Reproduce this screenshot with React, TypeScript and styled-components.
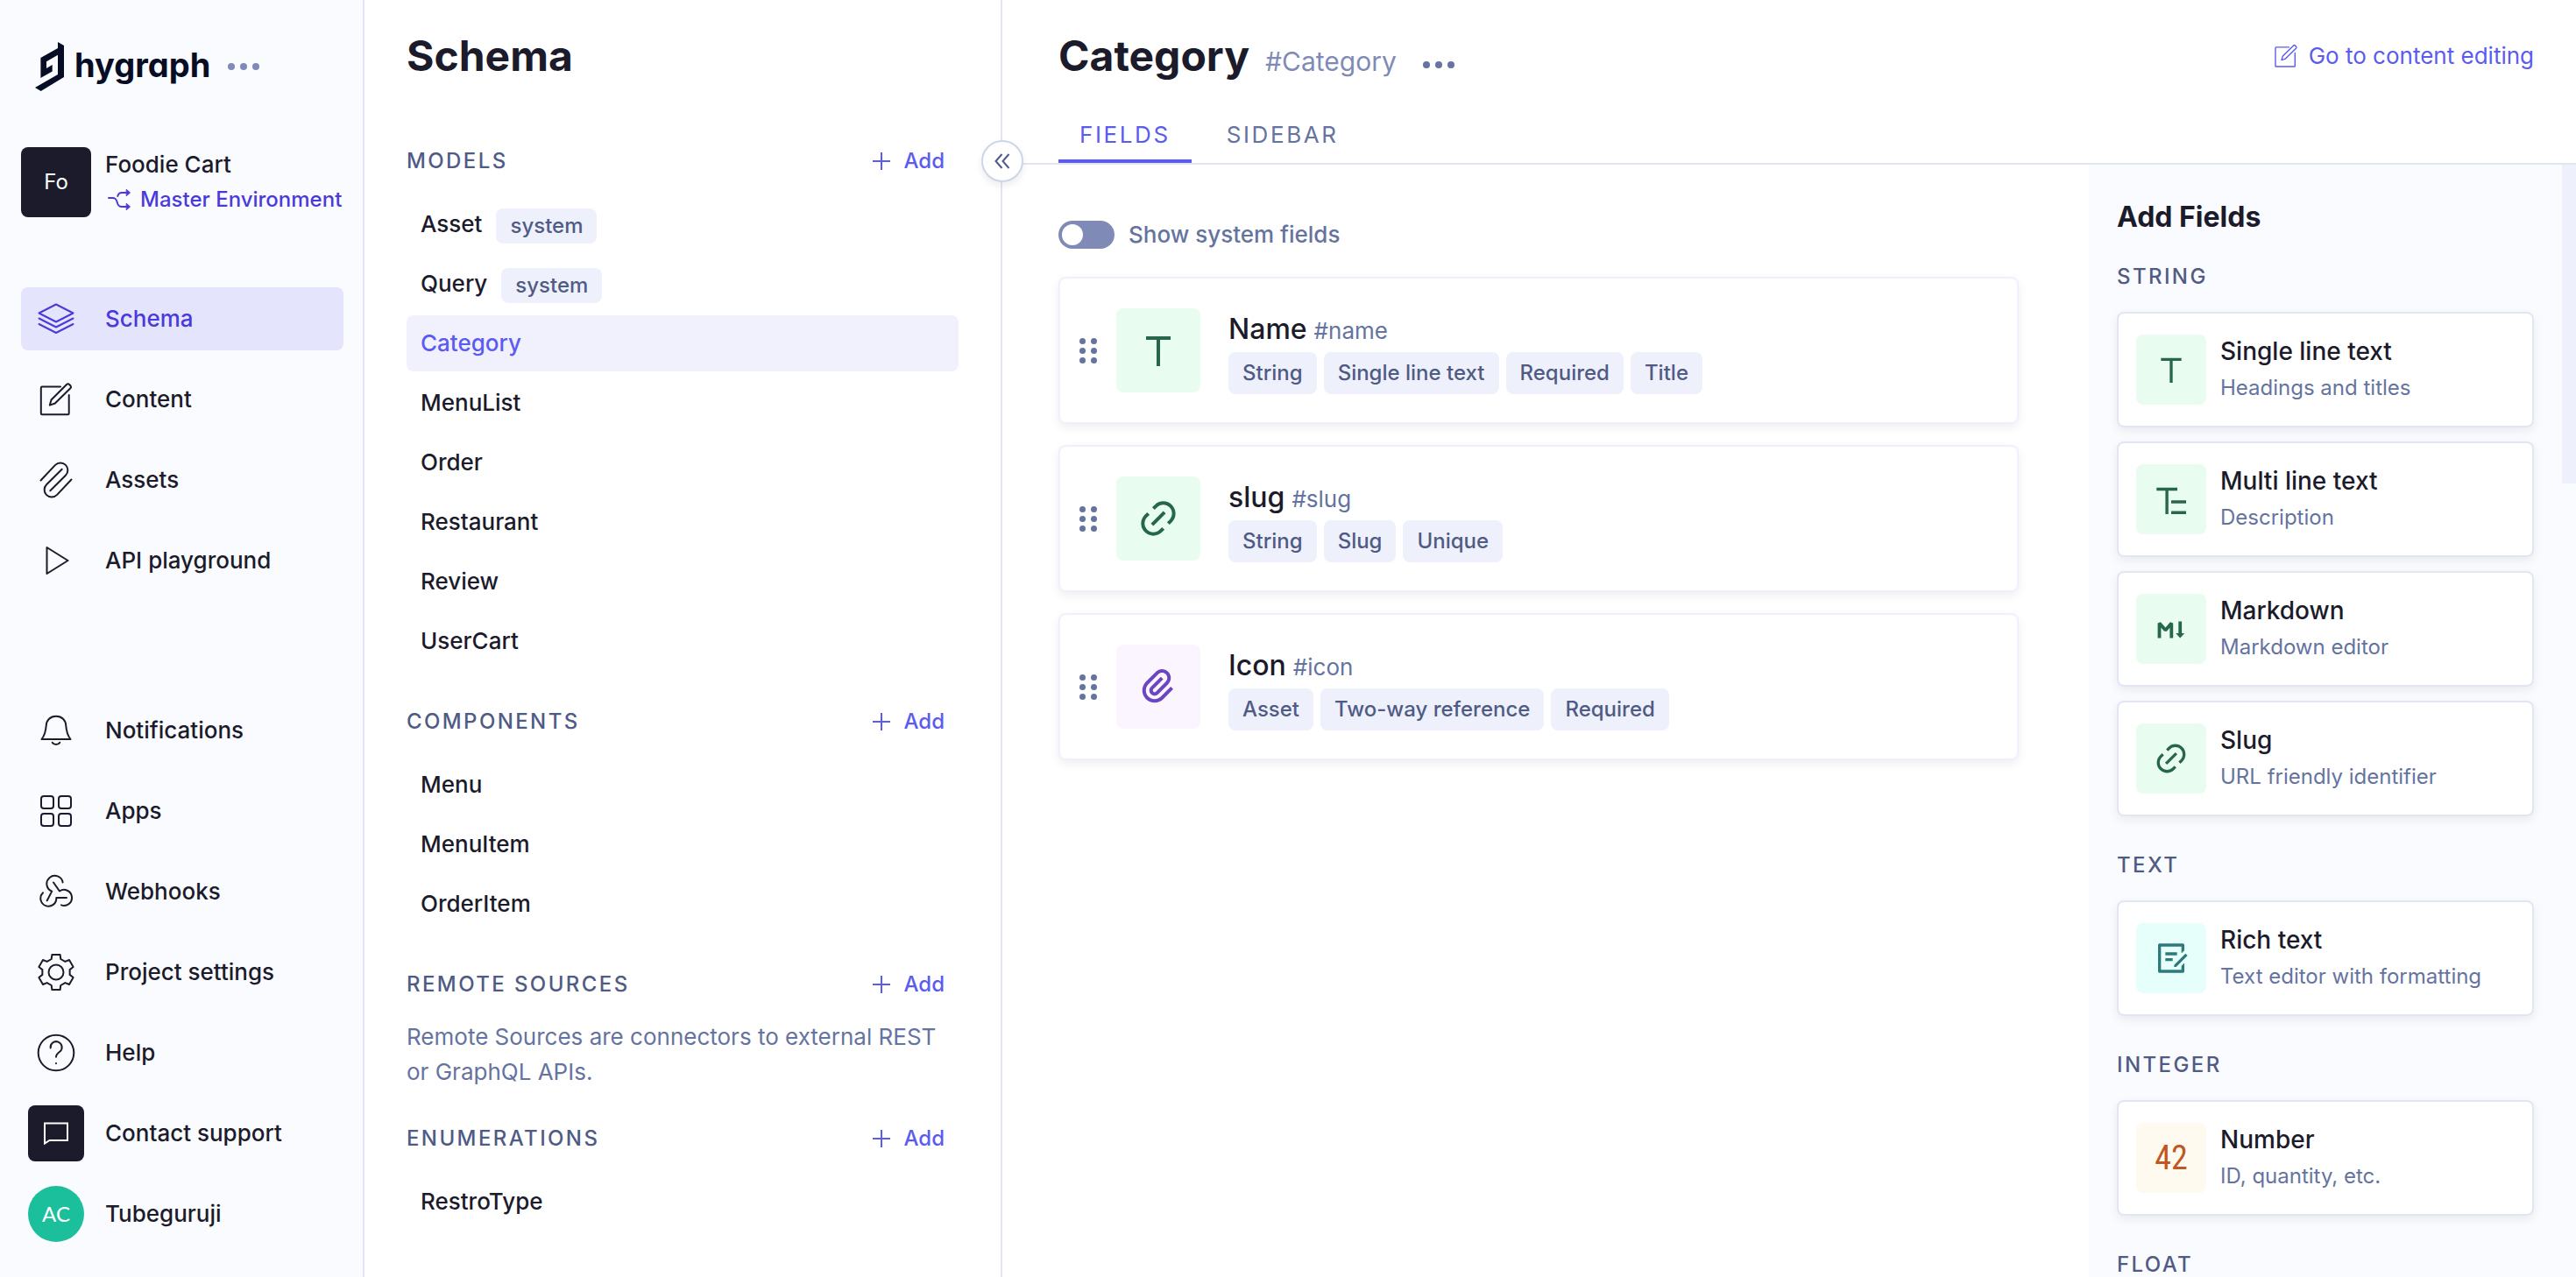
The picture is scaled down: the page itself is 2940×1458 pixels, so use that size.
import React, { useState } from "react";
import styled, { createGlobalStyle, css } from "styled-components";
import { RiText, RiLink, RiAttachment2, RiDraftLine } from "react-icons/ri";

const color = {
  ink: "#1b1b2b",
  slate: "#505b85",
  muted: "#6573a0",
  soft: "#7f8bb6",
  brand: "#5b5bf0",
  brandDark: "#4a3ada",
  brandTint: "#f1f1fe",
  brandSoft: "#e5e4fd",
  canvas: "#fafbff",
  chip: "#eef1fb",
  line: "#e2e6f3",
};

const GlobalStyle = createGlobalStyle`
  *, *::before, *::after { box-sizing: border-box; }
  body { margin: 0; background: #fff; color: ${color.ink}; font-family: Inter, "Liberation Sans", sans-serif; font-size: 26px; line-height: 40px; }
  h1, h2, h3, p, ul { margin: 0; padding: 0; }
  ul { list-style: none; }
  a { color: inherit; text-decoration: none; }
  button { font: inherit; color: inherit; background: none; border: 0; padding: 0; cursor: pointer; }
  svg { display: block; flex: none; }
`;

const Shell = styled.div`
  display: flex;
  height: 100vh;
  overflow: hidden;
`;

/* ---------- Primary sidebar ---------- */

const Sidebar = styled.nav`
  display: flex;
  flex-direction: column;
  flex: none;
  width: 416px;
  padding: 36px 22px 36px 24px;
  background: ${color.canvas};
  border-right: 2px solid ${color.line};
`;

const Brand = styled.div`
  display: flex;
  align-items: center;
  height: 80px;
  padding-left: 16px;
`;

const BrandName = styled.span`
  margin: 0 20px 0 12px;
  padding-bottom: 4px;
  color: #070d24;
  font-size: 38px;
  font-weight: 700;
  font-feature-settings: "cv11";
  line-height: 64px;
`;

const Project = styled.div`
  display: flex;
  gap: 16px;
  margin: 52px 0 80px;
`;

const ProjectBadge = styled.div`
  display: flex;
  align-items: center;
  justify-content: center;
  width: 80px;
  height: 80px;
  border-radius: 8px;
  background: ${color.ink};
  color: #fff;
  font-size: 24px;
`;

const ProjectText = styled.div`
  font-weight: 500;
  white-space: nowrap;
`;

const EnvironmentLink = styled.a`
  display: flex;
  align-items: center;
  gap: 8px;
  color: ${color.brandDark};
  font-size: 24px;
`;

const NavList = styled.ul`
  display: flex;
  flex-direction: column;
  gap: 20px;

  & + & {
    margin-top: auto;
  }
`;

const NavLink = styled.a<{ $active?: boolean }>`
  display: flex;
  align-items: center;
  gap: 16px;
  height: 72px;
  border-radius: 8px;
  font-weight: 500;
  ${(p) =>
    p.$active &&
    css`
      background: ${color.brandSoft};
      color: ${color.brandDark};
    `}
`;

const NavIcon = styled.span`
  display: flex;
  align-items: center;
  justify-content: center;
  width: 80px;
`;

const SquareMark = styled.span`
  display: flex;
  align-items: center;
  justify-content: center;
  width: 64px;
  height: 64px;
  border-radius: 8px;
  background: ${color.ink};
  color: #fff;
`;

const Avatar = styled.span`
  display: flex;
  align-items: center;
  justify-content: center;
  width: 64px;
  height: 64px;
  border-radius: 50%;
  background: #1bbf9c;
  color: #fff;
  font-family: Lato, sans-serif;
  font-size: 24px;
  font-weight: 400;
`;

const Dots = styled.button`
  display: flex;
  gap: 6px;

  i {
    width: 8px;
    height: 8px;
    border-radius: 50%;
    background: currentColor;
  }
`;

const BrandDots = styled(Dots)`
  color: ${color.soft};
`;

/* ---------- Schema panel ---------- */

const SchemaPanel = styled.section`
  position: relative;
  flex: none;
  width: 728px;
  padding: 32px 48px;
  border-right: 2px solid ${color.line};
`;

const PageTitle = styled.h1`
  font-size: 48px;
  font-weight: 700;
  line-height: 64px;
`;

const CollapseButton = styled.button`
  position: absolute;
  top: 160px;
  right: -26px;
  z-index: 1;
  display: flex;
  align-items: center;
  justify-content: center;
  width: 48px;
  height: 48px;
  border: 2px solid #cfd5e9;
  border-radius: 50%;
  background: #fff;
  color: ${color.slate};
  box-shadow: 0 4px 8px rgba(27, 27, 43, 0.08);
`;

const SchemaGroups = styled.div`
  padding-top: 68px;
`;

const GroupHeader = styled.div`
  display: flex;
  align-items: center;
  justify-content: space-between;
  padding-right: 16px;
  margin-bottom: 20px;
`;

const Overline = styled.h2`
  color: ${color.slate};
  font-size: 24px;
  font-weight: 500;
  letter-spacing: 0.1em;
`;

const AddButton = styled.button`
  display: flex;
  align-items: center;
  gap: 16px;
  color: ${color.brand};
  font-size: 24px;
  font-weight: 500;
`;

const ModelList = styled.ul`
  display: flex;
  flex-direction: column;
  gap: 4px;
  margin-bottom: 40px;
`;

const ModelLink = styled.a<{ $active?: boolean }>`
  display: flex;
  align-items: center;
  gap: 16px;
  height: 64px;
  padding: 0 16px;
  border-radius: 8px;
  font-weight: 500;
  ${(p) =>
    p.$active &&
    css`
      background: ${color.brandTint};
      color: ${color.brand};
    `}
`;

const Chip = styled.span`
  padding: 4px 16px;
  border-radius: 8px;
  background: ${color.chip};
  color: ${color.slate};
  font-size: 24px;
  font-weight: 500;
`;

const SystemChip = styled(Chip)`
  margin-top: 4px;
  padding: 0 16px;
`;

const GroupNote = styled.p`
  margin-bottom: 36px;
  color: ${color.muted};
`;

/* ---------- Model editor ---------- */

const Editor = styled.main`
  display: flex;
  flex-direction: column;
  flex: 1;
  min-width: 0;
`;

const EditorHeader = styled.header`
  padding: 32px 48px 0 64px;
  border-bottom: 2px solid ${color.line};
`;

const TitleRow = styled.div`
  display: flex;
  align-items: center;
`;

const ApiId = styled.span`
  margin: 12px 30px 0 18px;
  color: ${color.soft};
  font-size: 30px;
`;

const TitleDots = styled(Dots)`
  margin-top: 20px;
  color: #6673a3;
`;

const ContentLink = styled.a`
  display: flex;
  align-items: center;
  gap: 12px;
  margin-left: auto;
  color: ${color.brand};
`;

const Tabs = styled.div`
  display: flex;
  gap: 16px;
  margin-top: 28px;
`;

const Tab = styled.button<{ $active?: boolean }>`
  padding: 10px 24px 8px;
  border-bottom: 4px solid ${(p) => (p.$active ? color.brand : "transparent")};
  color: ${(p) => (p.$active ? color.brand : color.muted)};
  font-weight: 400;
  letter-spacing: 0.1em;
`;

const EditorBody = styled.div`
  display: flex;
  flex: 1;
  min-height: 0;
`;

const FieldsColumn = styled.section`
  flex: 1;
  min-width: 0;
  padding: 60px 80px 0 64px;
`;

const SwitchLabel = styled.label`
  display: flex;
  align-items: center;
  gap: 16px;
  margin-bottom: 28px;
  color: ${color.muted};
  font-weight: 500;
`;

const Switch = styled.input`
  appearance: none;
  width: 64px;
  height: 32px;
  margin: 0;
  padding: 4px;
  border-radius: 16px;
  background: ${color.soft};

  &::before {
    content: "";
    display: block;
    width: 24px;
    height: 24px;
    border-radius: 50%;
    background: #fff;
  }

  &:checked {
    background: ${color.brand};
  }

  &:checked::before {
    margin-left: 32px;
  }
`;

const FieldList = styled.ul`
  display: flex;
  flex-direction: column;
  gap: 24px;
`;

const FieldCard = styled.li`
  display: flex;
  align-items: center;
  height: 168px;
  padding: 0 22px;
  border: 2px solid ${color.chip};
  border-radius: 8px;
  background: #fff;
  box-shadow: 0 4px 12px rgba(0, 0, 0, 0.07);
`;

const DragHandle = styled.button`
  display: grid;
  grid-template-columns: 7px 7px;
  gap: 4px 6px;
  margin-right: 22px;

  i {
    width: 7px;
    height: 7px;
    border-radius: 50%;
    background: ${color.muted};
  }
`;

const tones = {
  green: ["#e9fcf0", "#276749"],
  purple: ["#faf5ff", "#6b46c1"],
  teal: ["#e6fffa", "#2c7a7b"],
  orange: ["#fffaf0", "#c05621"],
};
type Tone = keyof typeof tones;

const TypeIcon = styled.span<{ $tone: Tone; $size: number }>`
  display: flex;
  align-items: center;
  justify-content: center;
  flex: none;
  width: ${(p) => p.$size}px;
  height: ${(p) => p.$size}px;
  border-radius: 8px;
  background: ${(p) => tones[p.$tone][0]};
  color: ${(p) => tones[p.$tone][1]};
  font-size: ${(p) => p.$size / 2}px;
`;

const FieldText = styled.div`
  margin-left: 32px;
`;

const FieldName = styled.h3`
  font-size: 32px;
  font-weight: 500;
  line-height: 52px;

  span {
    margin-left: 8px;
    color: ${color.muted};
    font-size: 26px;
    font-weight: 400;
    line-height: 32px;
  }
`;

const ChipRow = styled.div`
  display: flex;
  gap: 8px;
`;

/* ---------- Add fields panel ---------- */

const AddPanel = styled.aside`
  display: flex;
  flex: none;
  width: 556px;
  overflow: hidden;
  background: ${color.canvas};
`;

const AddPanelContent = styled.div`
  flex: 1;
  padding: 40px 32px 0;
`;

const AddTitle = styled.h2`
  margin-bottom: 28px;
  font-size: 32px;
  font-weight: 700;
`;

const TypeGroup = styled.section`
  margin-bottom: 36px;
`;

const TypeList = styled.div`
  display: flex;
  flex-direction: column;
  gap: 16px;
  margin-top: 20px;
`;

const TypeCard = styled.button`
  display: flex;
  align-items: center;
  gap: 16px;
  height: 132px;
  padding: 0 20px;
  border: 2px solid ${color.line};
  border-radius: 8px;
  background: #fff;
  text-align: left;
  box-shadow: 0 4px 12px rgba(0, 0, 0, 0.07);
`;

const TypeName = styled.span`
  display: block;
  font-size: 28px;
  font-weight: 500;
`;

const TypeNote = styled.span`
  display: block;
  margin-top: 2px;
  color: ${color.muted};
  font-size: 24px;
`;

const Digits = styled.span`
  font-family: "Roboto Condensed", "Open Sans Condensed", "Liberation Sans Narrow", Roboto, sans-serif;
  font-size: 38px;
  font-weight: 400;
`;

const ScrollTrack = styled.div`
  width: 16px;

  &::before {
    content: "";
    display: block;
    height: 364px;
    background: ${color.chip};
  }
`;

/* ---------- Icons ---------- */

const LineIcon = ({ children, size = 40 }: { children: React.ReactNode; size?: number }) => (
  <svg width={size} height={size} viewBox="0 0 40 40" overflow="visible" fill="none" stroke="currentColor" strokeWidth="2" strokeLinecap="round" strokeLinejoin="round" aria-hidden="true">
    {children}
  </svg>
);

const BrandMark = () => (
  <svg width="33" height="56" viewBox="0 0 33 56" fill="#070d24" aria-hidden="true">
    <path d="M26 0 33 4V40L6.700 56 0 52 26 37V14.700L13 22.300V30L19.700 26V33.600L6.400 41V18L26 7Z" />
  </svg>
);

const LayersIcon = () => (
  <LineIcon>
    <path d="M20 3.500 39.500 13.500 20 23.500.500 13.500ZM.500 19.500 20 29.500 39.500 19.500M.500 26 20 36 39.500 26" />
  </LineIcon>
);

const EditPath = () => (
  <path d="M25 5.500H4a1.200 1.200 0 0 0-1.200 1.200V36a1.200 1.200 0 0 0 1.200 1.200H33.500a1.200 1.200 0 0 0 1.200-1.200V15M12.800 26.600 14.500 20.500 32.300 2.700a2 2 0 0 1 2.500 0L36.600 4.500a2 2 0 0 1 0 2.500L18.800 24.500Z" />
);

const ContentIcon = () => (
  <LineIcon>
    <EditPath />
  </LineIcon>
);

const AssetsIcon = () => (
  <LineIcon>
    <path d="M2.500 20.500 19.100 2.900A8.300 8.300 0 0 1 30.900 14.700L13.300 32.300M37.500 19.500 20.900 37.100A8.300 8.300 0 0 1 9.100 25.300L26.700 7.700" />
  </LineIcon>
);

const PlayIcon = () => (
  <LineIcon>
    <path d="M9.500 5 33.500 20 9.500 35Z" />
  </LineIcon>
);

const BellIcon = () => (
  <LineIcon>
    <path d="M3.500 30H36.500C32.500 25 31.800 21 31.300 14.500 31 8 26.500 3.700 20 3.700S9 8 8.700 14.500C8.200 21 7.500 25 3.500 30ZM15.700 33.700C17 36.600 23 36.600 24.300 33.700" />
  </LineIcon>
);

const AppsIcon = () => (
  <LineIcon>
    <rect x="3" y="3" width="14" height="14" rx="3" />
    <rect x="23" y="3" width="14" height="14" rx="3" />
    <rect x="3" y="23" width="14" height="14" rx="3" />
    <rect x="23" y="23" width="14" height="14" rx="3" />
  </LineIcon>
);

const WebhookIcon = () => (
  <LineIcon>
    <path d="M27.600 9.400A9.200 9.200 0 1 0 15.200 19.600L9.700 30.300M5 21.300A9 9 0 1 0 20.300 27H32M17 9.500 24 19.500A9 9 0 1 1 26 35.400" />
  </LineIcon>
);

const toothAngles = [0, 60, 120, 180, 240, 300];
const toothProfile = [
  [-5.3, -15],
  [-4.6, -20],
  [4.6, -20],
  [5.3, -15],
];
const gearPoints = toothAngles
  .flatMap((deg) => {
    const a = (deg * Math.PI) / 180;
    return toothProfile.map(([x, y]) => {
      const px = 20 + x * Math.cos(a) - y * Math.sin(a);
      const py = 20 + x * Math.sin(a) + y * Math.cos(a);
      return `${px.toFixed(2)},${py.toFixed(2)}`;
    });
  })
  .join(" ");

const GearIcon = () => (
  <LineIcon>
    <polygon points={gearPoints} />
    <circle cx="20" cy="20" r="8.500" />
  </LineIcon>
);

const HelpIcon = () => (
  <LineIcon>
    <circle cx="20" cy="20" r="20.300" />
    <path d="M13.700 14.500A6.500 6.500 0 1 1 24.500 18.500C21.500 21 20 22 20 24.700M20 32V32.300" />
  </LineIcon>
);

const ChatIcon = () => (
  <svg width="28" height="26" viewBox="0 0 28 26" fill="none" stroke="currentColor" strokeWidth="2" aria-hidden="true">
    <path d="M1 1.500H27V21H6.500L1 24.500Z" />
  </svg>
);

const BranchIcon = () => (
  <svg width="32" height="32" viewBox="0 0 32 32" fill="none" stroke="currentColor" strokeWidth="2" strokeLinecap="round" aria-hidden="true">
    <path d="M4 14H8.500C16.500 14 11 24 19 24H24M14.300 12C15 9 16.500 8 19 8H24" />
    <path d="M24.500 4.500 28.500 8 24.500 11.500ZM24.500 20.500 28.500 24 24.500 27.500Z" fill="currentColor" strokeWidth="1" />
  </svg>
);

const PlusIcon = () => (
  <svg width="20" height="20" viewBox="0 0 20 20" fill="none" stroke="currentColor" strokeWidth="2" aria-hidden="true">
    <path d="M10 0V20M0 10H20" />
  </svg>
);

const CollapseIcon = () => (
  <svg width="20" height="20" viewBox="0 0 20 20" fill="none" stroke="currentColor" strokeWidth="2" aria-hidden="true">
    <path d="M9.500 2 2.500 10 9.500 18M17.500 2 10.500 10 17.500 18" />
  </svg>
);

const MultiLineIcon = () => (
  <svg width="40" height="40" viewBox="0 0 40 40" fill="none" stroke="currentColor" strokeWidth="3.400" aria-hidden="true">
    <path d="M3.300 8.500H27M15.100 8.500V37M20 23H37M20 35.300H37" />
  </svg>
);

const MarkdownIcon = () => (
  <svg width="40" height="40" viewBox="0 0 40 40" fill="none" stroke="currentColor" strokeWidth="3.800" aria-hidden="true">
    <path d="M6.500 30.500V13.500L13.500 21.500 20.300 13.500V30.500" strokeLinejoin="bevel" />
    <path d="M30.200 11.500V26" />
    <path d="M25.200 25H35.200L30.200 30.500Z" fill="currentColor" stroke="none" />
  </svg>
);

/* ---------- Data ---------- */

const primaryNav = [
  { label: "Schema", icon: <LayersIcon />, active: true },
  { label: "Content", icon: <ContentIcon /> },
  { label: "Assets", icon: <AssetsIcon /> },
  { label: "API playground", icon: <PlayIcon /> },
];

const secondaryNav = [
  { label: "Notifications", icon: <BellIcon /> },
  { label: "Apps", icon: <AppsIcon /> },
  { label: "Webhooks", icon: <WebhookIcon /> },
  { label: "Project settings", icon: <GearIcon /> },
  { label: "Help", icon: <HelpIcon /> },
  { label: "Contact support", icon: <SquareMark><ChatIcon /></SquareMark> },
  { label: "Tubeguruji", icon: <Avatar>AC</Avatar> },
];

type Group = { title: string; items?: string[]; note?: string };

const systemModels = ["Asset", "Query"];
const groups: Group[] = [
  {
    title: "MODELS",
    items: ["Asset", "Query", "Category", "MenuList", "Order", "Restaurant", "Review", "UserCart"],
  },
  { title: "COMPONENTS", items: ["Menu", "MenuItem", "OrderItem"] },
  { title: "REMOTE SOURCES", note: "Remote Sources are connectors to external REST or GraphQL APIs." },
  { title: "ENUMERATIONS", items: ["RestroType"] },
];

const fields: { name: string; id: string; tone: Tone; icon: React.ReactNode; tags: string[] }[] = [
  { name: "Name", id: "#name", tone: "green", icon: <RiText />, tags: ["String", "Single line text", "Required", "Title"] },
  { name: "slug", id: "#slug", tone: "green", icon: <RiLink />, tags: ["String", "Slug", "Unique"] },
  { name: "Icon", id: "#icon", tone: "purple", icon: <RiAttachment2 />, tags: ["Asset", "Two-way reference", "Required"] },
];

type FieldType = { name: string; note: string; tone: Tone; icon: React.ReactNode };

const fieldTypes: { title: string; types: FieldType[] }[] = [
  {
    title: "STRING",
    types: [
      { name: "Single line text", note: "Headings and titles", tone: "green", icon: <RiText /> },
      { name: "Multi line text", note: "Description", tone: "green", icon: <MultiLineIcon /> },
      { name: "Markdown", note: "Markdown editor", tone: "green", icon: <MarkdownIcon /> },
      { name: "Slug", note: "URL friendly identifier", tone: "green", icon: <RiLink /> },
    ],
  },
  {
    title: "TEXT",
    types: [{ name: "Rich text", note: "Text editor with formatting", tone: "teal", icon: <RiDraftLine /> }],
  },
  {
    title: "INTEGER",
    types: [{ name: "Number", note: "ID, quantity, etc.", tone: "orange", icon: <Digits>42</Digits> }],
  },
  { title: "FLOAT", types: [] },
];

const NavItems = ({ items }: { items: { label: string; icon: React.ReactNode; active?: boolean }[] }) => (
  <NavList>
    {items.map((item) => (
      <li key={item.label}>
        <NavLink href="#" $active={item.active}>
          <NavIcon>{item.icon}</NavIcon>
          {item.label}
        </NavLink>
      </li>
    ))}
  </NavList>
);

export default function App() {
  const [selected, setSelected] = useState("Category");
  const [tab, setTab] = useState("FIELDS");
  const [showSystem, setShowSystem] = useState(false);

  return (
    <>
      <GlobalStyle />
      <Shell>
        <Sidebar>
          <Brand>
            <BrandMark />
            <BrandName>hygraph</BrandName>
            <BrandDots aria-label="Project menu">
              <i />
              <i />
              <i />
            </BrandDots>
          </Brand>
          <Project>
            <ProjectBadge>Fo</ProjectBadge>
            <ProjectText>
              Foodie Cart
              <EnvironmentLink href="#">
                <BranchIcon />
                Master Environment
              </EnvironmentLink>
            </ProjectText>
          </Project>
          <NavItems items={primaryNav} />
          <NavItems items={secondaryNav} />
        </Sidebar>

        <SchemaPanel>
          <PageTitle>Schema</PageTitle>
          <CollapseButton aria-label="Collapse panel">
            <CollapseIcon />
          </CollapseButton>
          <SchemaGroups>
            {groups.map((group) => (
              <section key={group.title}>
                <GroupHeader>
                  <Overline>{group.title}</Overline>
                  <AddButton>
                    <PlusIcon />
                    Add
                  </AddButton>
                </GroupHeader>
                {group.items && (
                  <ModelList>
                    {group.items.map((name) => (
                      <li key={name}>
                        <ModelLink href="#" $active={name === selected} onClick={() => setSelected(name)}>
                          {name}
                          {systemModels.includes(name) && <SystemChip>system</SystemChip>}
                        </ModelLink>
                      </li>
                    ))}
                  </ModelList>
                )}
                {group.note && <GroupNote>{group.note}</GroupNote>}
              </section>
            ))}
          </SchemaGroups>
        </SchemaPanel>

        <Editor>
          <EditorHeader>
            <TitleRow>
              <PageTitle>Category</PageTitle>
              <ApiId>#Category</ApiId>
              <TitleDots aria-label="Model menu">
                <i />
                <i />
                <i />
              </TitleDots>
              <ContentLink href="#">
                <LineIcon size={28}>
                  <EditPath />
                </LineIcon>
                Go to content editing
              </ContentLink>
            </TitleRow>
            <Tabs role="tablist">
              {["FIELDS", "SIDEBAR"].map((name) => (
                <Tab key={name} role="tab" aria-selected={tab === name} $active={tab === name} onClick={() => setTab(name)}>
                  {name}
                </Tab>
              ))}
            </Tabs>
          </EditorHeader>
          <EditorBody>
            <FieldsColumn>
              <SwitchLabel>
                <Switch type="checkbox" role="switch" checked={showSystem} onChange={() => setShowSystem(!showSystem)} />
                Show system fields
              </SwitchLabel>
              <FieldList>
                {fields.map((field) => (
                  <FieldCard key={field.name}>
                    <DragHandle aria-label={`Reorder ${field.name}`}>
                      <i />
                      <i />
                      <i />
                      <i />
                      <i />
                      <i />
                    </DragHandle>
                    <TypeIcon $tone={field.tone} $size={96}>
                      {field.icon}
                    </TypeIcon>
                    <FieldText>
                      <FieldName>
                        {field.name}
                        <span>{field.id}</span>
                      </FieldName>
                      <ChipRow>
                        {field.tags.map((tag) => (
                          <Chip key={tag}>{tag}</Chip>
                        ))}
                      </ChipRow>
                    </FieldText>
                  </FieldCard>
                ))}
              </FieldList>
            </FieldsColumn>
            <AddPanel>
              <AddPanelContent>
                <AddTitle>Add Fields</AddTitle>
                {fieldTypes.map((group) => (
                  <TypeGroup key={group.title}>
                    <Overline>{group.title}</Overline>
                    <TypeList>
                      {group.types.map((type) => (
                        <TypeCard key={type.name}>
                          <TypeIcon $tone={type.tone} $size={80}>
                            {type.icon}
                          </TypeIcon>
                          <span>
                            <TypeName>{type.name}</TypeName>
                            <TypeNote>{type.note}</TypeNote>
                          </span>
                        </TypeCard>
                      ))}
                    </TypeList>
                  </TypeGroup>
                ))}
              </AddPanelContent>
              <ScrollTrack />
            </AddPanel>
          </EditorBody>
        </Editor>
      </Shell>
    </>
  );
}
